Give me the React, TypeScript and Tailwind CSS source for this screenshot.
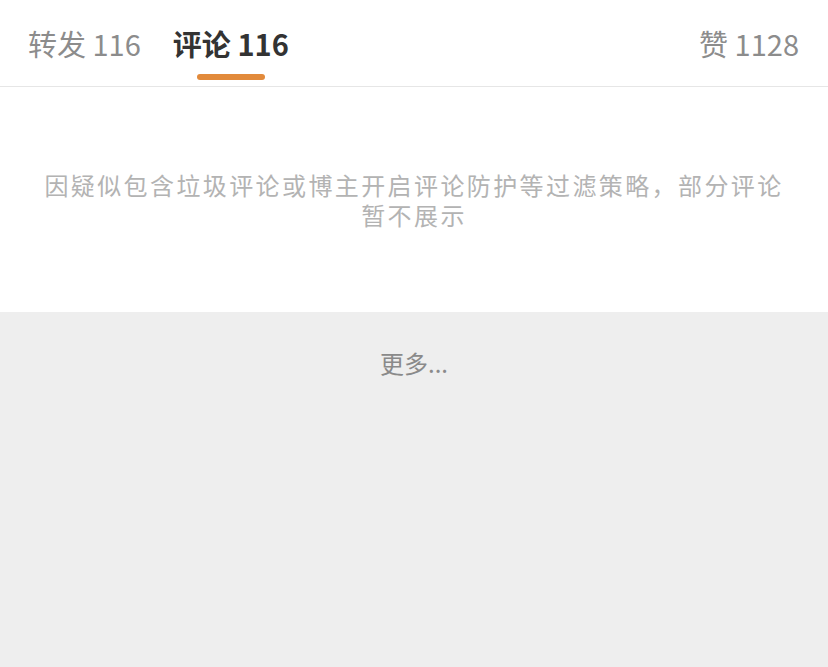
import { type FC } from "react";

const font = { fontFamily: '"Noto Sans CJK SC", "Noto Sans", sans-serif' };

const Tab: FC<{ label: string; count: string; active?: boolean }> = ({
  label,
  count,
  active,
}) => {
  return (
    <div className="flex flex-col items-center">
      <div
        className={
          active
            ? "text-[29px] leading-[40px] font-semibold text-[#333333]"
            : "text-[29px] leading-[40px] text-[#8c8c8c]"
        }
      >
        {label} {count}
      </div>
      {active ? (
        <div className="mt-[11px] h-[6px] w-[68px] rounded-full bg-[#e28a3b]" />
      ) : (
        <div className="mt-[11px] h-[6px]" />
      )}
    </div>
  );
};

export default function App() {
  return (
    <div className="flex min-h-[667px] w-full flex-col bg-[#eeeeee]" style={font}>
      <div className="flex h-[87px] items-start justify-between border-b border-[#e6e6e6] bg-white pl-[28px] pr-[29px] pt-[23px]">
        <div className="flex gap-[32px]">
          <Tab label="转发" count="116" />
          <Tab label="评论" count="116" active />
        </div>
        <Tab label="赞" count="1128" />
      </div>

      <div className="bg-white pb-[82px] pt-[83px]">
        <p className="text-center text-[24px] leading-[30px] tracking-[2.4px] text-[#b3b3b3]">
          <span className="block whitespace-nowrap">
            因疑似包含垃圾评论或博主开启评论防护等过滤策略，部分评论
          </span>
          <span className="block whitespace-nowrap">暂不展示</span>
        </p>
      </div>

      <div className="pt-[36px] text-center text-[24px] leading-[30px] text-[#8a8a8a]">
        更多...
      </div>
    </div>
  );
}
